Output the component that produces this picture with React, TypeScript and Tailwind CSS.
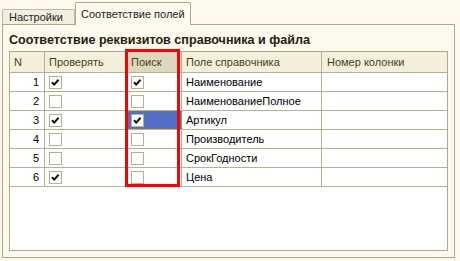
import React from "react";

const rows = [
  { n: 1, check: true, search: true, field: "Наименование" },
  { n: 2, check: false, search: false, field: "НаименованиеПолное" },
  { n: 3, check: true, search: true, field: "Артикул", selected: true },
  { n: 4, check: false, search: false, field: "Производитель" },
  { n: 5, check: false, search: false, field: "СрокГодности" },
  { n: 6, check: true, search: false, field: "Цена" },
];

const cols = "grid grid-cols-[35px_81px_56px_140px_125px]";

function CheckBox({ checked }: { checked: boolean }) {
  return (
    <div className="w-[13px] h-[13px] border border-[#b7af8f] bg-white flex items-center justify-center">
      {checked && (
        <svg width="11" height="11" viewBox="0 0 11 11">
          <path d="M2 5.2 L4.2 7.6 L8.6 2.8" fill="none" stroke="#111" strokeWidth="2" />
        </svg>
      )}
    </div>
  );
}

export default function App() {
  return (
    <div className="w-[460px] h-[261px] bg-[#fdf9ee] font-['Liberation_Sans',Arial,sans-serif] text-[11px] text-black">
      {/* tabs */}
      <div className="flex items-end h-[24px] pl-[2px]">
        <div className="h-[15px] w-[73px] border border-b-0 border-[#c1b998] bg-[#f3efe0] rounded-t-[2px] flex items-center pl-[6px] text-[#222] leading-none">
          Настройки
        </div>
        <div className="relative z-10 -mb-px h-[23px] w-[116px] border border-b-0 border-[#b3aa85] bg-[#fdf9ee] rounded-t-[2px] flex items-center pl-[5px] text-[#222] leading-none">
          Соответствие полей
        </div>
      </div>

      {/* panel */}
      <div className="ml-[2px] w-[453px] h-[234px] border border-[#b3aa85] px-[6px]">
        <div className="h-[26px] flex items-center pt-[4px] font-bold text-[12.6px] text-[#2a2208]">
          Соответствие реквизитов справочника и файла
        </div>
        <div className="relative h-[200px] border border-[#b3aa85] bg-white">
          <div className={`${cols} h-[21px] bg-[#f2f0dd] border-b border-[#b8b091] text-[#4a3c18]`}>
            <div className="border-r border-[#b8b091] pl-[4px] flex items-center">N</div>
            <div className="border-r border-[#b8b091] pl-[4px] flex items-center">Проверять</div>
            <div className="border-r border-[#b8b091] pl-[5px] flex items-center bg-[#dcd8c0]">Поиск</div>
            <div className="border-r border-[#b8b091] pl-[4px] flex items-center">Поле справочника</div>
            <div className="pl-[5px] flex items-center">Номер колонки</div>
          </div>
          {rows.map((r) => (
            <div key={r.n} className={`${cols} h-[19px] border-b border-[#b8b091]`}>
              <div className="border-r border-[#b8b091] pr-[5px] flex items-center justify-end">{r.n}</div>
              <div className="border-r border-[#b8b091] pl-[4px] flex items-center">
                <CheckBox checked={r.check} />
              </div>
              <div
                className={`border-r border-[#b8b091] pl-[5px] flex items-center ${
                  r.selected ? "bg-[#5470c6] outline outline-1 outline-dotted outline-offset-[-1px] outline-[#8a7a3a]" : ""
                }`}
              >
                <CheckBox checked={r.search} />
              </div>
              <div className="border-r border-[#b8b091] pl-[4px] flex items-center">{r.field}</div>
              <div />
            </div>
          ))}
          {/* red highlight */}
          <div className="absolute left-[115px] top-[-3px] w-[55px] h-[138px] border-[3px] border-[#ff0000] pointer-events-none" />
        </div>
      </div>
    </div>
  );
}
